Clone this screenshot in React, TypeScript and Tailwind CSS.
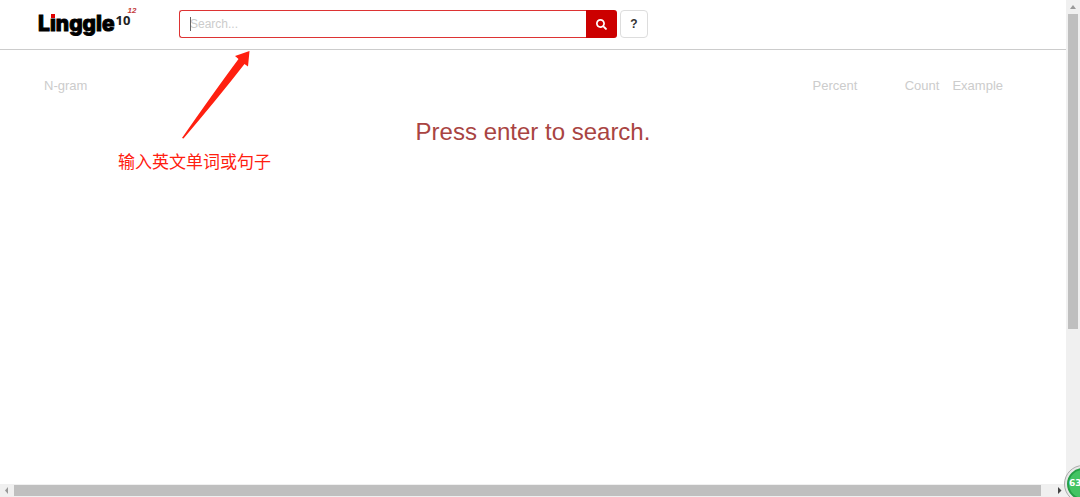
import React from 'react';
import { FaSearch } from 'react-icons/fa';

const Logo: React.FC = () => (
  <a href="#" aria-label="Linggle" className="flex w-[141px] shrink-0 items-start text-black font-['Inter',sans-serif]">
    <span className="text-[21px] leading-[28px] font-extrabold [-webkit-text-stroke:1px_black]">
      L<span className="relative">ı<span className="absolute left-[1px] top-[3px] size-[4px] bg-[#e00000]" /></span>nggle
    </span>
    <span className="pt-[3px] pl-[1px] text-[13px] leading-[14px] font-bold text-[#222] font-['Open_Sans',sans-serif]">10</span>
    <sup className="top-0 -mt-[3px] -ml-[3px] text-[8px] leading-[8px] font-bold italic text-[#c43c3c] font-['Liberation_Sans',sans-serif]">12</sup>
  </a>
);

const Header: React.FC = () => (
  <header className="flex h-[50px] items-start border-b border-[#ccc] pt-[10px] pl-[38px]">
    <Logo />
    <form className="flex h-[28px] gap-[3px]" onSubmit={(e) => e.preventDefault()}>
      <div className="flex">
        <div className="relative flex">
          <input
            type="text"
            aria-label="Search"
            placeholder="Search..."
            className="w-[407px] rounded-l-[3px] border border-r-0 border-[#d33] bg-white px-[10px] text-[12px] text-[#333] outline-none placeholder:text-[#ccc]"
          />
          {/* Text caret */}
          <span className="absolute left-[11px] top-[7px] h-[14px] w-px bg-[#666]" />
        </div>
        <button type="submit" aria-label="Submit search" className="flex w-[31px] items-center justify-center rounded-r-[3px] bg-[#c00] text-white">
          <FaSearch size={11} />
        </button>
      </div>
      <button type="button" className="w-[28px] rounded-[4px] border border-[#ddd] bg-white text-[12px] font-bold text-[#333]">
        ?
      </button>
    </form>
  </header>
);

const Results: React.FC = () => (
  <main className="pt-[28px] pr-[63px] pl-[44px]">
    <table className="w-full text-[13px] leading-[16px] text-[#ccc]">
      <thead>
        <tr>
          <th className="text-left font-normal">N-gram</th>
          <th className="w-[60px] text-right font-normal">Percent</th>
          <th className="w-[82px] text-right font-normal">Count</th>
          <th className="w-[63px] pl-[13px] text-left font-normal">Example</th>
        </tr>
      </thead>
    </table>
  </main>
);

const Annotation: React.FC = () => (
  <div className="pointer-events-none absolute left-[118px] top-[50px] text-[#ff2010]">
    <svg width="136" height="90" viewBox="0 0 136 90" fill="currentColor">
      <path d="M131.5 1 L117 6 L120.5 9 Q96 42 64 88 L65.5 88.5 Q100 48 126.5 14 L130 16.5 Z" />
    </svg>
    <p className="mt-[9px] text-[17px] leading-[24px] font-['Noto_Sans_CJK_SC',sans-serif]">输入英文单词或句子</p>
  </div>
);

const VerticalScrollbar: React.FC = () => (
  <div className="flex w-[14px] shrink-0 flex-col bg-[#f0f0f0] px-[2px]">
    <svg className="h-[14px] w-[10px] shrink-0" viewBox="0 0 10 14" fill="#999">
      <path d="M5 5 L8 9 H2 Z" />
    </svg>
    <div className="h-[65%] bg-[#bfbfbf]" />
  </div>
);

const HorizontalScrollbar: React.FC = () => (
  <div className="flex h-[13px] shrink-0 items-center bg-[#f0f0f0] pr-[14px]">
    <svg className="h-[13px] w-[14px] shrink-0" viewBox="0 0 14 13" fill="#999">
      <path d="M5 6.5 L8 3 V10 Z" />
    </svg>
    <div className="mr-[11px] h-[11px] flex-1 bg-[#bfbfbf]" />
    <svg className="h-[13px] w-[14px] shrink-0" viewBox="0 0 14 13" fill="#444">
      <path d="M9.5 6.5 L6 3 V10 Z" />
    </svg>
  </div>
);

export default function App() {
  return (
    <div className="relative flex h-screen flex-col overflow-hidden bg-white font-['Liberation_Sans',Arial,sans-serif]">
      <div className="flex min-h-0 flex-1">
        <div className="relative min-w-0 flex-1">
          <Header />
          <Results />
          <h1 className="mt-[22px] text-center text-[24px] leading-[32px] text-[#a94442]">Press enter to search.</h1>
          <Annotation />
        </div>
        <VerticalScrollbar />
      </div>
      <HorizontalScrollbar />

      {/* Floating score ball */}
      <div className="absolute -right-[22px] -bottom-[6px] flex size-[38px] items-center rounded-full border border-[#aaa] bg-[#e8e8e8] p-[2px]">
        <div className="flex size-full items-center rounded-full border-2 border-[#26a047] bg-[#43c463] text-[9px] font-bold text-white font-['DejaVu_Sans',sans-serif]">63</div>
      </div>
    </div>
  );
}
